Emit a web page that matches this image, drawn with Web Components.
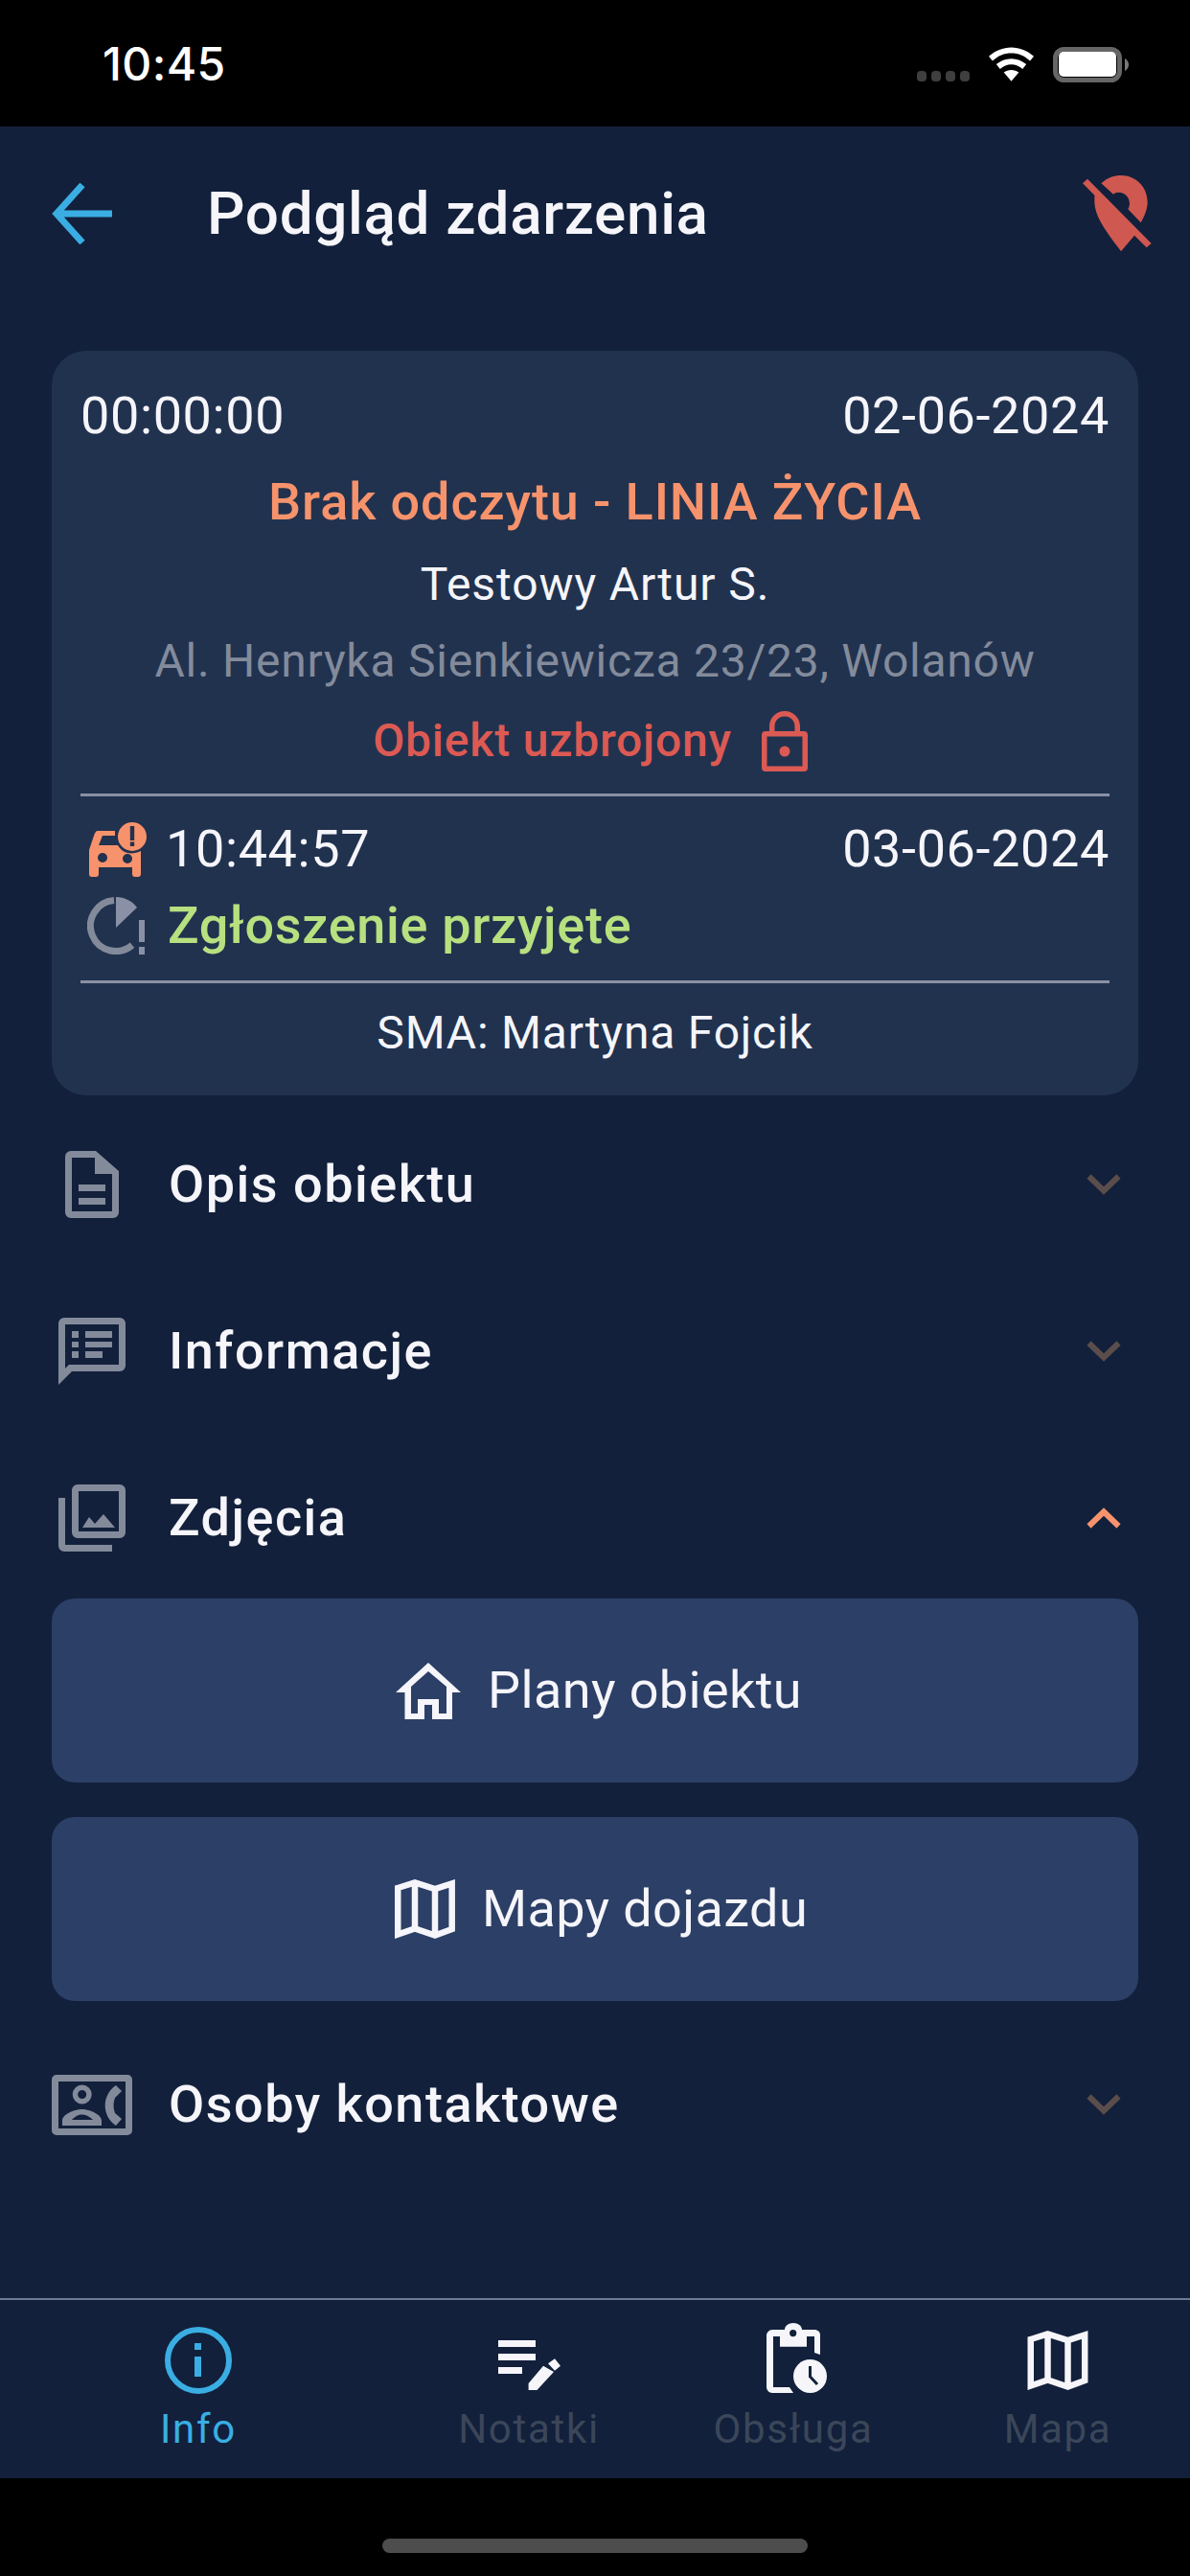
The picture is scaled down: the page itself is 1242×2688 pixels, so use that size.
<!DOCTYPE html>
<html lang="pl">
<head>
<meta charset="utf-8">
<title>Podgląd zdarzenia</title>
<style>
  html, body { margin: 0; background: #000; }
  body { width: 1242px; height: 2688px; overflow: hidden; font-family: Roboto, "Noto Sans", sans-serif; }
  app-screen { height: 2688px; }
</style>
</head>
<body>
<app-screen>
  <status-bar slot="top"></status-bar>
  <top-bar slot="top" title-text="Podgląd zdarzenia"></top-bar>
  <event-card></event-card>
  <accordion-row label="Opis obiektu" icon="doc"></accordion-row>
  <accordion-row label="Informacje" icon="info"></accordion-row>
  <accordion-row label="Zdjęcia" icon="photo" open></accordion-row>
  <wide-button label="Plany obiektu" icon="house"></wide-button>
  <wide-button label="Mapy dojazdu" icon="map"></wide-button>
  <accordion-row label="Osoby kontaktowe" icon="contact"></accordion-row>
  <tab-bar slot="bottom"></tab-bar>
  <home-strip slot="bottom"></home-strip>
</app-screen>

<script>
const MAP_PATH = "M3.250 9 21 3.500l21 6.500 17.700-5.500V52L42 58.500l-21-7-17.750 6zM21 3.500v48M42 10v48.500";

const ICONS = {
  doc: `<svg width="56" height="70" viewBox="0 0 56 70"><path fill="#838b9b" fill-rule="evenodd" d="M6 0h26l24 21v43a6 6 0 0 1-6 6H6a6 6 0 0 1-6-6V6a6 6 0 0 1 6-6zm1 7v56h42V24H31V7zM14 35h28v7H14zm0 14h28v7H14z"/></svg>`,
  info: `<svg width="70" height="70" viewBox="0 0 70 70"><path fill="#838b9b" fill-rule="evenodd" d="M6 0h58a6 6 0 0 1 6 6v44a6 6 0 0 1-6 6H14L0 70V6a6 6 0 0 1 6-6zm1 7v46l4-4h52V7zM14 14h7v7h-7zm14 0h28v7H28zM14 25h7v6h-7zm14 0h28v6H28zM14 35h7v7h-7zm14 0h18v7H28z"/></svg>`,
  photo: `<svg width="70" height="70" viewBox="0 0 70 70"><path fill="#838b9b" fill-rule="evenodd" d="M20 0h44a6 6 0 0 1 6 6v44a6 6 0 0 1-6 6H20a6 6 0 0 1-6-6V6a6 6 0 0 1 6-6zm1 7v42h42V7zM0 14h7v49h49v7H6a6 6 0 0 1-6-6zM25 45l7-11 6 7 9-10 12 14z"/></svg>`,
  contact: `<svg width="84" height="63" viewBox="0 0 84 63"><path fill="#838b9b" fill-rule="evenodd" d="M5 0h74a5 5 0 0 1 5 5v53a5 5 0 0 1-5 5H5a5 5 0 0 1-5-5V5a5 5 0 0 1 5-5zm2 7v49h70V7zM31.700 10.500a10 10 0 1 1 0 20 10 10 0 0 1 0-20zm0 5.500a4.500 4.500 0 1 0 0 9 4.500 4.500 0 0 0 0-9zM11 53v-5c0-7 13-12 20.500-12S52 41 52 48v5zm10-6h22c-4-4-8-5.500-11.500-5.500S25 43 21 47zM67 11l6 6-7 7c-2 5-2 11 0 16l7 6-6 7c-15-10-15-32 0-42z"/></svg>`,
  house: `<svg width="68" height="59" viewBox="0 0 68 59"><path fill="#f5f5fa" fill-rule="evenodd" d="M34 0l34 31h-9v28H38V44h-8v15H9.500V31H0zm0 9L16 25v28h7V38h22v15h8V25z"/></svg>`,
  map: `<svg width="63" height="62" viewBox="0 0 63 62"><path fill="none" stroke="#f5f5fa" stroke-width="6.500" d="${MAP_PATH}"/></svg>`
};

class AppScreen extends HTMLElement {
  constructor() {
    super();
    this.attachShadow({ mode: "open" });
    this.shadowRoot.innerHTML = `
    <style>
      :host { display: flex; flex-direction: column; background: #12203b; color: #f5f5fa; }
      .top { flex: none; }
      .content { flex: 1; min-height: 0; display: flex; flex-direction: column; padding: 0 54px; }
      .bottom { flex: none; }
    </style>
    <div class="top"><slot name="top"></slot></div>
    <div class="content"><slot></slot></div>
    <div class="bottom"><slot name="bottom"></slot></div>`;
  }
}

class StatusBar extends HTMLElement {
  constructor() {
    super();
    this.attachShadow({ mode: "open" });
    this.shadowRoot.innerHTML = `
    <style>
      :host { display: flex; height: 132px; background: #000; color: #fff; align-items: center; justify-content: space-between; padding: 2px 64px 0 107px; box-sizing: border-box; }
      .time { font: 500 48px/1 Inter, "Liberation Sans", sans-serif; letter-spacing: .4px; margin-top: -1px; }
      .icons { display: flex; align-items: center; gap: 20px; }
      .dots { display: flex; gap: 5px; margin-top: 25px; }
      .dots i { width: 10px; height: 11px; border-radius: 4px; background: #3f3f3f; display: block; }
    </style>
    <span class="time">10:45</span>
    <div class="icons">
      <div class="dots"><i></i><i></i><i></i><i></i></div>
      <svg width="47" height="36" viewBox="0 0 48 36"><path fill="#fff" d="M24 0c9 0 17 3.500 24 9.500l-4 5C38 9 31.500 6.300 24 6.300S10 9 4 14.500l-4-5C7 3.500 15 0 24 0zm0 12c6 0 11.500 2.200 16 6l-4 5c-3.500-3-7.700-4.700-12-4.700S15.500 20 12 23l-4-5c4.500-3.800 10-6 16-6zm0 12c3 0 5.700 1 8 2.800L24 36l-8-9.200c2.300-1.800 5-2.800 8-2.800z"/></svg>
      <svg width="79" height="37" viewBox="0 0 79 37"><rect x="2.500" y="2.500" width="67" height="32" rx="9" fill="none" stroke="#666" stroke-width="5"/><rect x="6" y="5" width="60" height="26" rx="5" fill="#fff"/><path fill="#7a7a7a" d="M75 12c2 1 4 3.500 4 6.500S77 24 75 25z"/></svg>
    </div>`;
  }
}

class TopBar extends HTMLElement {
  constructor() {
    super();
    this.attachShadow({ mode: "open" });
    this.shadowRoot.innerHTML = `
    <style>
      :host { display: flex; align-items: center; height: 234px; padding: 0 40px 52px 54px; box-sizing: border-box; }
      .back { flex: none; display: block; }
      h1 { flex: 1; margin: 0; font: 500 62px/1 Roboto, sans-serif; color: #f5f5fa; letter-spacing: .65px; }
      .off { flex: none; }
    </style>
    <svg class="back" width="162" height="64" viewBox="0 0 162 64"><path fill="none" stroke="#3aaee3" stroke-width="7" d="M63 32H5M32 2 5 32l27 30"/></svg>
    <h1></h1>
    <svg class="off" width="72" height="80" viewBox="150 97 216 240"><path fill="#cf5851" d="M208 122c20-19 42-25 62-25 48 0 83 38 83 83 0 20-8 42-21 65l-40-42c13-23-2-53-30-53-7 0-12 2-16 6zM150 122l15-14 200 202-15 13-38-38-42 50c-45-60-83-110-83-155v-21z"/></svg>`;
    this.shadowRoot.querySelector("h1").textContent = this.getAttribute("title-text");
  }
}

class EventCard extends HTMLElement {
  constructor() {
    super();
    this.attachShadow({ mode: "open" });
    this.shadowRoot.innerHTML = `
    <style>
      :host { display: block; box-sizing: border-box; height: 777px; background: #21324f; border-radius: 36px; padding: 38px 30px 0; color: #f5f5fa; font: 400 54px/1 Roboto, sans-serif; flex: none; }
      .row { display: flex; justify-content: space-between; align-items: center; }
      .center { text-align: center; }
      .time { height: 60px; letter-spacing: .62px; }
      .alarm { margin-top: 30px; font-weight: 500; line-height: 60px; color: #f7936c; letter-spacing: .9px; }
      .name { margin-top: 29px; font-size: 48px; line-height: 54px; letter-spacing: .9px; }
      .addr { margin-top: 26px; font-size: 48px; line-height: 54px; color: #838b9b; letter-spacing: .75px; }
      .armed { margin-top: 24px; padding-right: 10px; display: flex; justify-content: center; align-items: center; gap: 31px; color: #dc5a53; font-size: 48px; font-weight: 500; line-height: 64px; letter-spacing: .8px; }
      hr { border: 0; height: 3px; background: #8a90a5; margin: 0; }
      .h1 { margin-top: 23px; }
      .h2 { margin-top: 24px; }
      .stamp { margin-top: 25px; }
      .stamp .left { display: flex; align-items: center; gap: 20px; margin-left: 9px; }
      .status { display: flex; align-items: center; gap: 24px; margin: 17px 0 0 7px; height: 66px; color: #b7e07f; font-weight: 500; letter-spacing: .7px; }
      .sma { margin-top: 25px; font-size: 48px; line-height: 54px; letter-spacing: .8px; }
    </style>
    <div class="row time"><span>00:00:00</span><span>02-06-2024</span></div>
    <div class="center alarm">Brak odczytu - LINIA ŻYCIA</div>
    <div class="center name">Testowy Artur S.</div>
    <div class="center addr">Al. Henryka Sienkiewicza 23/23, Wolanów</div>
    <div class="armed"><span>Obiekt uzbrojony</span>
      <svg width="48" height="63" viewBox="0 0 48 63"><path fill="#dc5a53" fill-rule="evenodd" d="M24 0c9 0 16 7 16 16v5h4a4 4 0 0 1 4 4v34a4 4 0 0 1-4 4H4a4 4 0 0 1-4-4V25a4 4 0 0 1 4-4h4v-5C8 7 15 0 24 0zm0 5.500c-6 0-10.500 4.500-10.500 10.500v5h21v-5c0-6-4.500-10.500-10.500-10.500zM5.500 26.500v31h37v-31zM24 36.500a5.500 5.500 0 1 1 0 11 5.500 5.500 0 0 1 0-11z"/></svg>
    </div>
    <hr class="h1">
    <div class="row stamp time">
      <span class="left">
        <svg width="60" height="57" viewBox="0 0 60 57"><path fill="#f7936c" fill-rule="evenodd" d="M9 9h18v5H14l-4 10h20c2 4 6 7 10 8 5 1 10 0 14-2v24a3 3 0 0 1-3 3h-3a3 3 0 0 1-3-3v-7H10v7a3 3 0 0 1-3 3H3a3 3 0 0 1-3-3V29l5-15c1-3 2-5 4-5zm5 23a5 5 0 1 0 0 10 5 5 0 0 0 0-10zm26 1a5 5 0 1 0 0 10 5 5 0 0 0 0-10zM45 0a15 15 0 1 1 0 30 15 15 0 0 1 0-30zm-2.200 4v15h4.400V4zm0 16.500V25h4.400v-4.500z"/></svg>
        <span>10:44:57</span>
      </span>
      <span>03-06-2024</span>
    </div>
    <div class="status">
      <svg width="60" height="60" viewBox="0 0 60 60"><path fill="none" stroke="#838b9b" stroke-width="7" d="M28 3.600A26.500 26.500 0 1 0 47 50.300"/><path fill="#8a90a5" d="M30 32V0c9 0 17 4 22 11zM54 24h6v23h-6zm0 28h6v8h-6z"/></svg>
      <span>Zgłoszenie przyjęte</span>
    </div>
    <hr class="h2">
    <div class="center sma">SMA: Martyna Fojcik</div>`;
  }
}

class AccordionRow extends HTMLElement {
  constructor() {
    super();
    this.attachShadow({ mode: "open" });
    const open = this.hasAttribute("open");
    this.shadowRoot.innerHTML = `
    <style>
      :host { display: flex; align-items: center; height: 174px; flex: none; }
      :host(:nth-of-type(1)) { margin-top: 6px; }
      :host([open]) { margin-bottom: -3px; }
      .ico { width: 84px; flex: none; display: flex; align-items: center; justify-content: center; margin-right: 38px; }
      span { flex: 1; font: 500 54px/1 Roboto, sans-serif; color: #f5f5fa; letter-spacing: 1.5px; }
      svg.ch { flex: none; margin-right: 18px; }
    </style>
    <div class="ico">${ICONS[this.getAttribute("icon")]}</div>
    <span>${this.getAttribute("label")}</span>
    <svg class="ch" width="36" height="22" viewBox="0 0 36 22"><path fill="none" stroke="${open ? "#f7936c" : "#5a4d4b"}" stroke-width="6" d="${open ? "M2.500 19.500 18 4.500l15.500 15" : "M2.500 2.500 18 17.500l15.500-15"}"/></svg>`;
  }
}

class WideButton extends HTMLElement {
  constructor() {
    super();
    this.attachShadow({ mode: "open" });
    this.shadowRoot.innerHTML = `
    <style>
      :host { display: flex; align-items: center; justify-content: center; gap: 28px; height: 192px; flex: none; background: #2c3f66; border-radius: 24px; margin-bottom: 36px; padding-left: 8px; color: #f5f5fa; font: 400 54px/1 Roboto, sans-serif; letter-spacing: .38px; box-sizing: border-box; }
      :host(:last-of-type) { margin-bottom: 21px; padding-left: 13px; }
    </style>
    ${ICONS[this.getAttribute("icon")]}
    <span>${this.getAttribute("label")}</span>`;
  }
}

class TabBar extends HTMLElement {
  constructor() {
    super();
    this.attachShadow({ mode: "open" });
    this.shadowRoot.innerHTML = `
    <style>
      :host { display: block; height: 188px; border-top: 2px solid #6f7a91; box-sizing: border-box; }
      .tabs { display: grid; grid-template-columns: 414px 276px 276px 276px; height: 100%; }
      .tab { display: flex; flex-direction: column; align-items: center; padding-top: 28px; box-sizing: border-box; font: 400 42px/1 Roboto, sans-serif; color: #3b4659; letter-spacing: 1.7px; }
      .tab .i { height: 70px; display: flex; align-items: center; justify-content: center; margin-bottom: 16px; }
      .tab svg { flex: none; }
      .on { color: #3aaee3; }
      .clip { margin-left: 7px; }
    </style>
    <div class="tabs">
      <div class="tab on"><div class="i"><svg width="70" height="70" viewBox="0 0 70 70"><circle cx="35" cy="35" r="32" fill="none" stroke="#3aaee3" stroke-width="6"/><path fill="#3aaee3" d="M31 17h7v7h-7zm0 14h7v21h-7z"/></svg></div><span>Info</span></div>
      <div class="tab"><div class="i"><svg width="65" height="62" viewBox="0 -10 65 62"><path fill="#f5f5fa" d="M0 0h39v7H0zM0 14h39v7H0zM0 28h25v7H0zM52 24.300l7-5 6 7.400-6 5zM31.600 45 47 26.700 58 33 39.800 52.700h-8.200z"/></svg></div><span>Notatki</span></div>
      <div class="tab"><div class="i clip"><svg width="63" height="78" viewBox="0 0 63 78"><path fill="#f5f5fa" fill-rule="evenodd" d="M6 7h13c0-4 4-7 9-7s9 3 9 7h13c3.500 0 6 2.500 6 5v21l-6-2V14h-8v10.700H14V14H7v53h17l4 6H6c-3 0-6-3-6-6V13c0-3 3-6 6-6zm21.700 0a3.600 3.600 0 1 0 0 7.200 3.600 3.600 0 0 0 0-7.200z"/><circle cx="45.500" cy="55.500" r="17.500" fill="#f5f5fa"/><path fill="none" stroke="#12203b" stroke-width="3" d="M45.500 45v11l7.500 8"/></svg></div><span>Obsługa</span></div>
      <div class="tab"><div class="i"><svg width="64" height="62" viewBox="0 0 63 62"><path fill="none" stroke="#f5f5fa" stroke-width="6.500" d="${MAP_PATH}"/></svg></div><span>Mapa</span></div>
    </div>`;
  }
}

class HomeStrip extends HTMLElement {
  constructor() {
    super();
    this.attachShadow({ mode: "open" });
    this.shadowRoot.innerHTML = `
    <style>
      :host { display: flex; height: 102px; background: #000; justify-content: center; align-items: flex-start; padding-top: 63px; box-sizing: border-box; }
      i { display: block; width: 444px; height: 15px; border-radius: 8px; background: #4d4d4d; }
    </style>
    <i></i>`;
  }
}

customElements.define("app-screen", AppScreen);
customElements.define("status-bar", StatusBar);
customElements.define("top-bar", TopBar);
customElements.define("event-card", EventCard);
customElements.define("accordion-row", AccordionRow);
customElements.define("wide-button", WideButton);
customElements.define("tab-bar", TabBar);
customElements.define("home-strip", HomeStrip);
</script>
</body>
</html>
